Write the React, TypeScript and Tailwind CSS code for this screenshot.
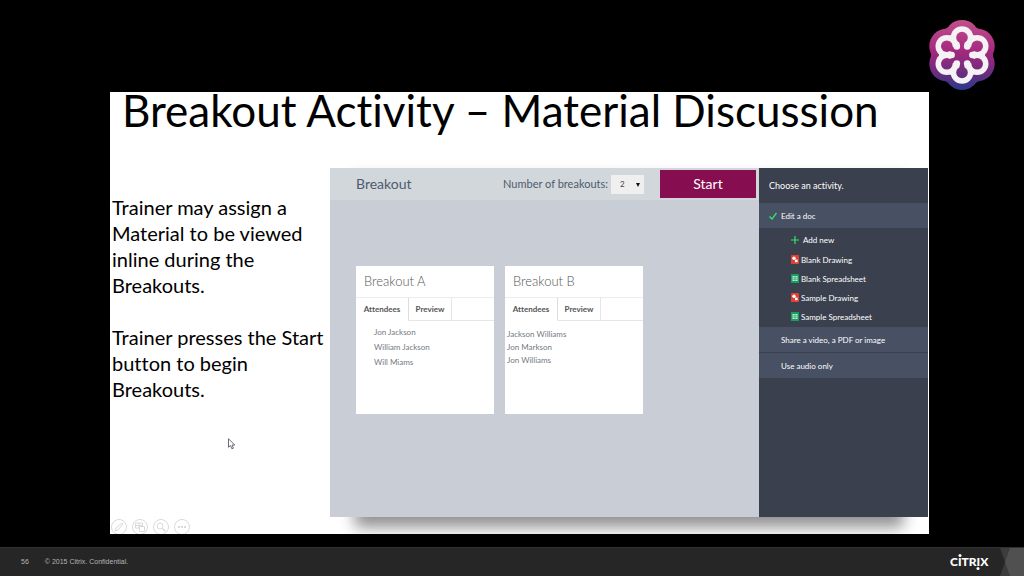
import { useState } from "react";

const GROUPS = [
  {
    name: "Breakout A",
    attendees: ["Jon Jackson", "William Jackson", "Will Miams"],
    list: "px-[18px] pt-1 leading-[15px]",
  },
  {
    name: "Breakout B",
    attendees: ["Jackson Williams", "Jon Markson", "Jon Williams"],
    list: "px-[2px] pt-[7px] leading-[13px]",
  },
];

const DOCS = [
  { label: "Blank Drawing", kind: "drawing" },
  { label: "Blank Spreadsheet", kind: "sheet" },
  { label: "Sample Drawing", kind: "drawing" },
  { label: "Sample Spreadsheet", kind: "sheet" },
];

const PETALS = [
  [0, -17.5],
  [15.2, -8.8],
  [15.2, 8.8],
  [0, 17.5],
  [-15.2, 8.8],
  [-15.2, -8.8],
];

const KNOBS = [
  [10.4, 0],
  [5.2, 8.6],
  [-5.2, 8.6],
  [-10.4, 0],
  [-5.2, -8.6],
  [5.2, -8.6],
];

function FlowerLogo() {
  return (
    <svg viewBox="-34 -36 68 72" className="h-[72px] w-[68px]" aria-label="Logo">
      <defs>
        <linearGradient
          id="petal"
          gradientUnits="userSpaceOnUse"
          x1="0"
          y1="-36"
          x2="0"
          y2="36"
        >
          <stop offset="0" stopColor="#c4508a" />
          <stop offset="0.45" stopColor="#a3297f" />
          <stop offset="0.75" stopColor="#6b2c7e" />
          <stop offset="1" stopColor="#243a8c" />
        </linearGradient>
      </defs>
      <g fill="url(#petal)">
        <circle r="31" />
        {PETALS.map(([x, y]) => (
          <circle key={`${x},${y}`} cx={x} cy={y} r="17.5" />
        ))}
      </g>
      <g fill="#f4f2f5">
        <circle r="23" />
        {PETALS.map(([x, y]) => (
          <circle key={`${x},${y}`} cx={x} cy={y} r="11.3" />
        ))}
      </g>
      <g fill="url(#petal)">
        <circle r="10" />
        {PETALS.map(([x, y]) => (
          <circle key={`${x},${y}`} cx={x} cy={y} r="5.8" />
        ))}
      </g>
      <path
        d="M.01 -16L0 16M-14 -8L14 8M-14 8L14 -8"
        stroke="url(#petal)"
        strokeWidth="5"
      />
      <g fill="#f4f2f5">
        {KNOBS.map(([x, y]) => (
          <circle key={`${x},${y}`} cx={x} cy={y} r="3.3" />
        ))}
      </g>
    </svg>
  );
}

function DocIcon({ kind }: { kind: string }) {
  if (kind === "drawing") {
    return (
      <svg viewBox="0 0 8 9" className="h-[9px] w-2">
        <rect width="8" height="9" rx="0.5" fill="#e0402f" />
        <circle cx="3" cy="3.3" r="1.7" fill="#fff" />
        <rect x="4" y="4.6" width="2.6" height="2.6" fill="#fff" />
      </svg>
    );
  }
  return (
    <svg viewBox="0 0 8 9" className="h-[9px] w-2">
      <rect width="8" height="9" rx="0.5" fill="#12a05c" />
      <rect x="1.5" y="2" width="5" height="5" fill="#cdebdc" />
      <path d="M1.5 3.7h5M1.5 5.3h5M4 2v5" stroke="#12a05c" strokeWidth="0.6" />
    </svg>
  );
}

function BreakoutCard({ group }: { group: (typeof GROUPS)[number] }) {
  return (
    <section className="h-[148px] w-[138px] bg-white">
      <h3 className="px-2 text-[13px] font-light leading-[31px] text-[#555]">
        {group.name}
      </h3>
      <div className="flex h-6 border-t border-[#ececec] text-[8px] font-bold text-[#555]">
        <button className="w-[53px] border-r border-b border-r-[#dcdcdc] border-b-white">
          Attendees
        </button>
        <button className="w-[43px] border-r border-b border-[#e6e6e6]">
          Preview
        </button>
        <span className="flex-1 border-b border-[#e6e6e6]" />
      </div>
      <ul className={`text-[8px] text-[#737a82] ${group.list}`}>
        {group.attendees.map((name) => (
          <li key={name}>{name}</li>
        ))}
      </ul>
    </section>
  );
}

function Sidebar() {
  return (
    <aside className="w-[169px] shrink-0 bg-[#3a404d] text-[8px] text-white">
      <h2 className="px-[10px] text-[9px] leading-[35px]">Choose an activity.</h2>
      <button className="flex h-[25px] w-full items-center gap-1 bg-[#485063] px-[10px]">
        <svg viewBox="0 0 8 8" className="size-2">
          <path
            d="M0.5 4.5L3 7L7.5 1"
            fill="none"
            stroke="#2ee66b"
            strokeWidth="1.3"
          />
        </svg>
        Edit a doc
      </button>
      <div className="flex h-[99px] flex-col pt-[2px] pl-8">
        <button className="flex h-5 items-center gap-1">
          <svg viewBox="0 0 8 8" className="size-2">
            <path d="M4 0v8M0 4h8" stroke="#2ee66b" strokeWidth="1.2" />
          </svg>
          Add new
        </button>
        {DOCS.map((doc) => (
          <button key={doc.label} className="flex h-[19px] items-center gap-[2px]">
            <DocIcon kind={doc.kind} />
            {doc.label}
          </button>
        ))}
      </div>
      <div className="flex flex-col gap-px">
        <button className="h-[25px] bg-[#485063] pl-[22px] text-left">
          Share a video, a PDF or image
        </button>
        <button className="h-[25px] bg-[#485063] pl-[22px] text-left">
          Use audio only
        </button>
      </div>
    </aside>
  );
}

function BreakoutApp() {
  const [count, setCount] = useState("2");

  return (
    <div className="relative mr-px mb-[17px] flex flex-1">
      <div className="absolute inset-x-7 top-2 bottom-0 shadow-[0_4px_14px_6px_rgba(0,0,0,0.12),0_8px_14px_2px_rgba(0,0,0,0.35)]" />
      <div className="relative flex flex-1 flex-col bg-[#c9cdd6]">
        <div className="flex h-8 items-center bg-[#d2d7db] pr-[3px] pl-[26px] text-[#4d5b6e]">
          <h2 className="text-sm">Breakout</h2>
          <label htmlFor="count" className="ml-auto text-[11px]">
            Number of breakouts:
          </label>
          <div className="relative mr-4 ml-[3px]">
            <select
              id="count"
              value={count}
              onChange={(e) => setCount(e.target.value)}
              className="block h-[19px] w-[33px] appearance-none bg-[#efefef] pl-[9px] text-[8px] text-[#444]"
            >
              <option>1</option>
              <option>2</option>
              <option>3</option>
              <option>4</option>
            </select>
            <svg
              viewBox="0 0 4 4"
              className="pointer-events-none absolute top-2 right-1 size-1"
            >
              <path d="M0 0h4L2 4z" fill="#111" />
            </svg>
          </div>
          <button className="h-7 w-24 bg-[#850d50] text-sm text-white">
            Start
          </button>
        </div>
        <div className="flex gap-[11px] px-[26px] pt-[66px]">
          {GROUPS.map((g) => (
            <BreakoutCard key={g.name} group={g} />
          ))}
        </div>
      </div>
      <div className="relative flex">
        <Sidebar />
      </div>
    </div>
  );
}

function SlideControls() {
  return (
    <div className="flex h-[15px] gap-[5px] overflow-hidden pl-px text-[#dadada]">
      <button aria-label="Pen">
        <svg viewBox="0 0 16 16" className="size-4" fill="none" stroke="currentColor">
          <circle cx="8" cy="8" r="7.5" />
          <path d="M4 12l1-3 6-5 1 1-5 6z" />
        </svg>
      </button>
      <button aria-label="All slides">
        <svg viewBox="0 0 16 16" className="size-4" fill="none" stroke="currentColor">
          <circle cx="8" cy="8" r="7.5" />
          <path d="M3.500 4h7v5h-7zM3.500 6.500h7M7 4v5" />
          <path d="M7.500 7.500h5v5h-5z" fill="#fff" />
        </svg>
      </button>
      <button aria-label="Zoom">
        <svg viewBox="0 0 16 16" className="size-4" fill="none" stroke="currentColor">
          <circle cx="8" cy="8" r="7.5" />
          <circle cx="7" cy="7" r="3" />
          <path d="M9.500 9.500l3 3" strokeWidth="1.5" />
        </svg>
      </button>
      <button aria-label="More">
        <svg viewBox="0 0 16 16" className="size-4" fill="none" stroke="currentColor">
          <circle cx="8" cy="8" r="7.5" />
          <path d="M4 8h8" strokeWidth="2" strokeDasharray="2 1" />
        </svg>
      </button>
    </div>
  );
}

export default function App() {
  return (
    <div className="flex min-h-screen flex-col bg-black">
      <header className="flex h-[92px] justify-end pt-[19px] pr-7">
        <FlowerLogo />
      </header>

      <main className="mr-[95px] ml-[110px] flex flex-1 flex-col bg-white font-['Lato',sans-serif] text-black [font-variant-ligatures:none]">
        <h1 className="h-[76px] pl-3 text-[44px] leading-9">
          Breakout Activity – Material Discussion
        </h1>
        <div className="flex flex-1">
          <div className="relative flex w-[220px] shrink-0 flex-col justify-between">
            <div className="space-y-[26px] pt-[26px] pl-[2px] text-xl leading-[26px]">
              <p>
                Trainer may assign a<br />
                Material to be viewed
                <br />
                inline during the
                <br />
                Breakouts.
              </p>
              <p>
                Trainer presses the Start
                <br />
                button to begin
                <br />
                Breakouts.
              </p>
            </div>
            <SlideControls />
            {/* Presenter's pointer */}
            <svg
              viewBox="0 0 8 12"
              className="absolute top-[270px] left-[118px] h-3 w-2"
            >
              <path
                d="M.5.8v8.400l2-1.700 1.400 3.300 1.500-.6L4 7h2.800z"
                fill="#fff"
                stroke="#555a66"
                strokeWidth="0.9"
              />
            </svg>
          </div>
          <BreakoutApp />
        </div>
      </main>

      <footer className="mt-[13px] flex h-[29px] items-center border-t border-[#303030] bg-[#262626] pl-[21px] font-['Liberation_Sans',sans-serif] text-[7px] text-[#b5b5b5]">
        <span>56</span>
        <span className="ml-4">© 2015 Citrix. Confidential.</span>
        <svg viewBox="0 0 40 16" className="ml-auto h-4 w-10" fill="#fff">
          <text
            x="1"
            y="12"
            fontFamily="Lato"
            fontWeight="900"
            fontSize="12"
          >
            CITRIX
          </text>
          <circle cx="11" cy="1.500" r="1.500" />
          <circle cx="29" cy="14.500" r="1.500" />
        </svg>
        <svg viewBox="0 0 24 28" className="ml-[11px] h-7 w-6">
          <path d="M0 0h24v28H0l5-14z" fill="#3c3c3c" />
          <path d="M10 0h14v28H10L5 14z" fill="#505050" />
        </svg>
      </footer>
    </div>
  );
}
